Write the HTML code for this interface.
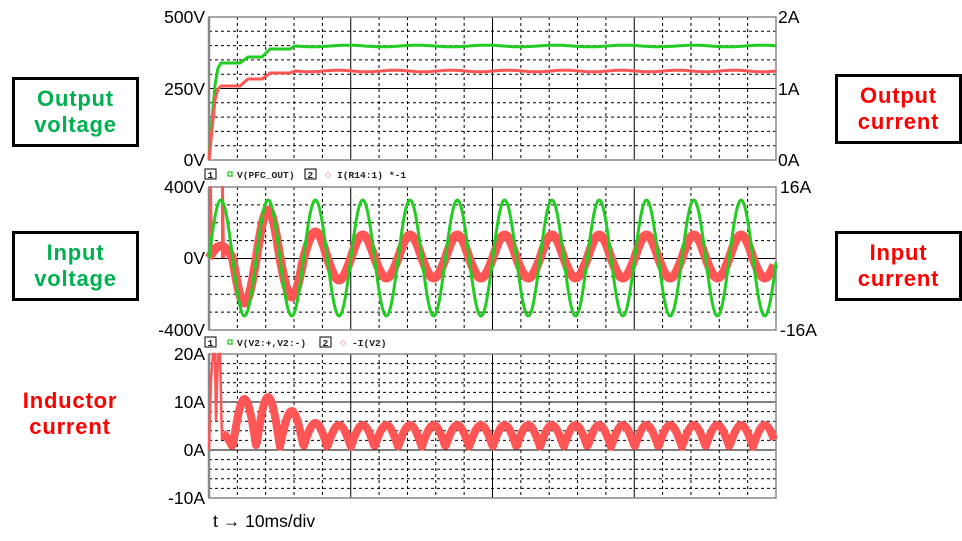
<!DOCTYPE html>
<html><head><meta charset="utf-8"><style>
body{margin:0;background:#fff;width:962px;height:541px;overflow:hidden;position:relative;font-family:"Liberation Sans",sans-serif}
.box{position:absolute;border:3px solid #000;box-sizing:border-box;text-align:center;font-weight:bold;font-size:22px;letter-spacing:0.8px;line-height:26px;display:flex;align-items:center;justify-content:center}
.g{color:#00b050}.r{color:#ff0000}
</style></head><body>
<svg id="s" width="962" height="541" style="position:absolute;left:0;top:0" font-family="Liberation Sans, sans-serif"></svg>
<div class="box g" style="left:12px;top:77px;width:127px;height:70px">Output<br>voltage</div>
<div class="box g" style="left:12px;top:231px;width:127px;height:70px">Input<br>voltage</div>
<div class="box r" style="left:835px;top:74px;width:127px;height:70px">Output<br>current</div>
<div class="box r" style="left:835px;top:231px;width:127px;height:70px">Input<br>current</div>
<div style="position:absolute;left:6px;top:388px;width:128px;text-align:center;font-weight:bold;font-size:22px;letter-spacing:0.8px;line-height:26px;color:#ff0000">Inductor<br>current</div>
<script>
var s=document.getElementById('s'),h='';
var X0=209,X1=776,W=X1-X0;
function grid(y0,y1,n,solidEvery){
  var dy=(y1-y0)/n;
  for(var i=1;i<20;i++){var x=X0+W*i/20;
    if(i%5==0)h+='<line x1="'+x+'" y1="'+y0+'" x2="'+x+'" y2="'+y1+'" stroke="#000" stroke-width="1"/>';
    else h+='<line x1="'+x+'" y1="'+y0+'" x2="'+x+'" y2="'+y1+'" stroke="#000" stroke-width="1" stroke-dasharray="3,3"/>';}
  for(var j=1;j<n;j++){var y=y0+dy*j;
    if(solidEvery.indexOf(j)>=0)h+='<line x1="'+X0+'" y1="'+y+'" x2="'+X1+'" y2="'+y+'" stroke="#000"/>';
    else h+='<line x1="'+X0+'" y1="'+y+'" x2="'+X1+'" y2="'+y+'" stroke="#000" stroke-dasharray="3,3"/>';}
  h+='<rect x="'+X0+'" y="'+y0+'" width="'+W+'" height="'+(y1-y0)+'" fill="none" stroke="#888" stroke-width="1.5"/>';
  h+='<line x1="'+X0+'" y1="'+y0+'" x2="'+X0+'" y2="'+y1+'" stroke="#888" stroke-width="2.5"/>';
}
function lab(x,y,t,a){h+='<text x="'+x+'" y="'+(y+6)+'" font-size="17.5" text-anchor="'+(a||'end')+'" fill="#000">'+t+'</text>';}
grid(17,160,10,[5]);grid(187,330,8,[4]);grid(354,498,15,[5,10]);
lab(205,17,'500V');lab(205,89,'250V');lab(205,160,'0V');
lab(778,17,'2A','start');lab(778,89,'1A','start');lab(778,160,'0A','start');
lab(205,187,'400V');lab(205,258,'0V');lab(205,330,'-400V');
lab(780,187,'16A','start');lab(780,330,'-16A','start');
lab(205,354,'20A');lab(205,402,'10A');lab(205,450,'0A');lab(205,498,'-10A');
h+='<text x="213" y="527" font-size="17.5">t → 10ms/div</text>';
function leg(y,a,b,bx){
 var F=' font-size="9.6" font-family="Liberation Mono" font-weight="bold" fill="#222"';
 h+='<rect x="205" y="'+(y-5)+'" width="11" height="10" fill="none" stroke="#000"/><text x="207.5" y="'+(y+4)+'"'+F+'>1</text>';
 h+='<rect x="228" y="'+(y-2)+'" width="4" height="4" fill="none" stroke="#2c2" stroke-width="1.3"/><text x="237" y="'+(y+4)+'"'+F+'>'+a+'</text>';
 h+='<rect x="'+bx+'" y="'+(y-5)+'" width="11" height="10" fill="none" stroke="#000"/><text x="'+(bx+2.5)+'" y="'+(y+4)+'"'+F+'>2</text>';
 h+='<text x="'+(bx+20)+'" y="'+(y+3)+'" font-size="8" fill="#f66">◇</text><text x="'+(bx+32)+'" y="'+(y+4)+'"'+F+'>'+b+'</text>';}
leg(174,'V(PFC_OUT)','I(R14:1) *-1',305);leg(342,'V(V2:+,V2:-)','-I(V2)',320);
function path(pts,c,w){h+='<path d="M'+pts.join('L')+'" fill="none" stroke="'+c+'" stroke-width="'+w+'" stroke-linejoin="round"/>';}
var P=47.3,x,p;
p=[[209,160],[212,120],[215,85],[218,68],[221,63]];
for(x=222;x<=776;x+=2){var v;
 if(x<240)v=63;else if(x<248)v=63-(x-240)*0.75;else if(x<262)v=57;else if(x<270)v=57-(x-262);else if(x<290)v=49;else if(x<296)v=49-(x-290)*0.66;else v=46+0.8*Math.sin((x-296)/11);
 p.push([x,v.toFixed(1)]);}
path(p,'#2c2',3);
p=[[209,160],[212,130],[215,100],[218,89],[221,86]];
for(x=222;x<=776;x+=2){var v;
 if(x<240)v=86;else if(x<248)v=86-(x-240)*0.9;else if(x<262)v=79;else if(x<270)v=79-(x-262)*0.7;else if(x<290)v=73;else if(x<296)v=73-(x-290)*0.4;else v=71+0.8*Math.sin((x-296)/9);
 p.push([x,v.toFixed(1)]);}
path(p,'#f55',3);
var amps=[12,-45,48,-39,26,-22];
function amp(k){return k<amps.length?amps[k]:(k%2==0?23:-20);}
p=[];
for(x=209;x<=774;x+=1){var ph=(x-X0)/(P/2),k=Math.floor(ph),f=ph-k;p.push([x,(258-amp(k)*Math.sin(Math.PI*f)).toFixed(1)]);}
path(p,'#f55',9);
path([[210,258],[210,187],[211,187],[212,258]],'#f55',2);
path([[222,258],[222,187],[223,187],[224,258]],'#f55',2);
p=[];for(x=209;x<=776;x+=1)p.push([x,(258-58*Math.sin(2*Math.PI*(x-X0)/P)).toFixed(1)]);
path(p,'#2c2',3);
var ia=[14,48,50,36,24];
p=[];for(x=223;x<=774;x+=1){var ph=(x-X0)/(P/2),k=Math.floor(ph),f=ph-k;var a=k<ia.length?ia[k]:22;p.push([x,(447-a*Math.sin(Math.PI*f)).toFixed(1)]);}
path(p,'#f55',8);
path([[209,450],[211,380],[213,354],[215,354],[216,420],[218,354],[220,354],[222,440]],'#f55',2.5);
s.innerHTML=h;
</script>
</body></html>
